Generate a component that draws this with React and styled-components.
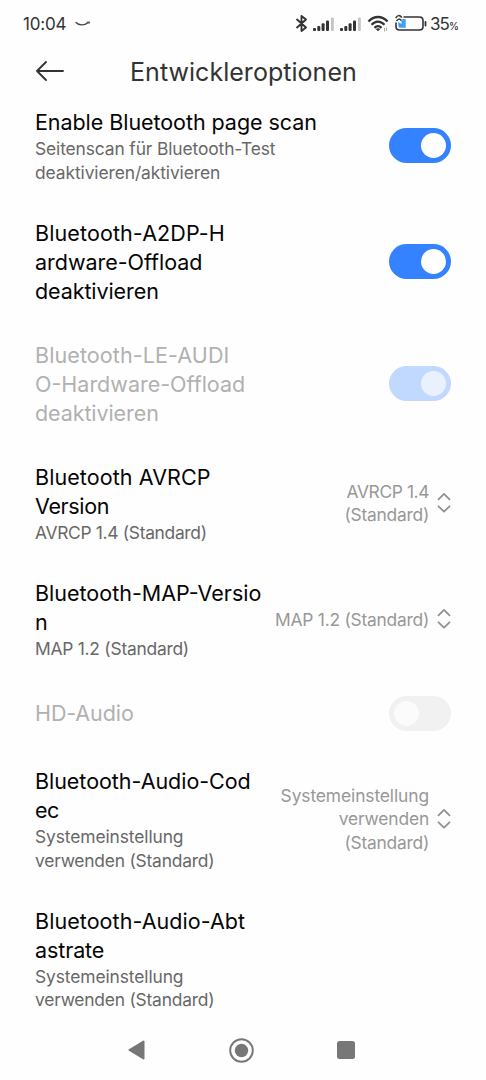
import React from 'react'
import styled, { createGlobalStyle } from 'styled-components'

const GlobalStyle = createGlobalStyle`
  body {
    margin: 0;
    background: #fefefe;
    font-family: Inter, 'Liberation Sans', sans-serif;
  }
`

const Screen = styled.div`
  display: flex;
  flex-direction: column;
  width: 486px;
  height: 1080px;
  overflow: hidden;
  background: #fefefe;
`

const StatusBar = styled.header`
  display: flex;
  justify-content: space-between;
  box-sizing: border-box;
  height: 46px;
  padding: 2px 28px 0 23px;
  color: #333;
`

const StatusGroup = styled.div`
  display: flex;
  align-items: center;
  height: 44px;
`

const Clock = styled.span`
  font-size: 17px;
  letter-spacing: -0.2px;
  margin-right: 9px;
`

const Percent = styled.span`
  width: 28px;
  font-size: 17px;
  letter-spacing: -0.9px;
  white-space: nowrap;

  small {
    font-size: 10px;
    font-weight: 500;
  }
`

const TitleBar = styled.div`
  display: flex;
  align-items: center;
  height: 50px;
  padding: 0 35px;
`

const BackButton = styled.button`
  display: flex;
  width: 30px;
  padding: 0;
  border: none;
  background: none;
`

const PageTitle = styled.h1`
  margin: 0 0 0 65px;
  font-size: 25px;
  font-weight: 400;
  line-height: 34px;
  letter-spacing: 0.04px;
  color: #333;
  padding-top: 2px;
`

const List = styled.main`
  display: flex;
  flex-direction: column;
  gap: 35px;
  flex: 1;
  padding: 12.4px 35px 0;
`

const Row = styled.section`
  display: flex;
  justify-content: space-between;
  align-items: center;
  min-height: 36.7px;
`

const Label = styled.div`
  color: ${props => props.$disabled ? '#b1b1b1' : '#050505'};
`

const Value = styled.div`
  display: flex;
  align-items: center;
  gap: 8px;
  margin-bottom: 1px;
  text-align: right;
`

const Line = styled.div`
  white-space: nowrap;
  font-size: 21.5px;
  line-height: 29px;
  letter-spacing: ${props => props.$ls || 0}px;
`

const SmallLine = styled(Line)`
  font-size: 17.4px;
  line-height: 23.3px;
  color: ${props => props.$light ? '#989898' : '#686868'};
`

const Toggle = styled.div`
  display: flex;
  justify-content: ${props => props.$on ? 'flex-end' : 'flex-start'};
  box-sizing: border-box;
  width: 62px;
  height: 35px;
  margin-bottom: 1px;
  padding: 5px;
  border-radius: 18px;
  background: ${props => !props.$on ? '#f1f1f1' : props.$disabled ? '#c1d9ff' : '#3482ff'};
`

const Knob = styled.div`
  width: 25px;
  height: 25px;
  border-radius: 50%;
  background: ${props => !props.$disabled ? '#fff' : props.$on ? '#e9f1ff' : '#fbfbfb'};
`

const NavBar = styled.footer`
  display: flex;
  justify-content: space-between;
  align-items: center;
  height: 60px;
  padding: 0 131px 0 128px;
`

const rows = [
  {
    title: [['Enable Bluetooth page scan', -0.06]],
    sub: [['Seitenscan für Bluetooth-Test', -0.12], ['deaktivieren/aktivieren', -0.09]],
    toggle: true,
    on: true,
  },
  {
    title: [['Bluetooth-A2DP-H', 0.11], ['ardware-Offload', -0.03], ['deaktivieren', -0.09]],
    toggle: true,
    on: true,
  },
  {
    title: [['Bluetooth-LE-AUDI', 0.1], ['O-Hardware-Offload', 0], ['deaktivieren', -0.09]],
    toggle: true,
    on: true,
    disabled: true,
  },
  {
    title: [['Bluetooth AVRCP', 0.08], ['Version', -0.35]],
    sub: [['AVRCP 1.4 (Standard)', -0.31]],
    value: [['AVRCP 1.4', -0.4], ['(Standard)', -0.24]],
  },
  {
    title: [['Bluetooth-MAP-Versio', 0], ['n', 0]],
    sub: [['MAP 1.2 (Standard)', -0.24]],
    value: [['MAP 1.2 (Standard)', -0.24]],
  },
  {
    title: [['HD-Audio', -0.1]],
    toggle: true,
    on: false,
    disabled: true,
  },
  {
    title: [['Bluetooth-Audio-Cod', -0.04], ['ec', -0.6]],
    sub: [['Systemeinstellung', -0.1], ['verwenden (Standard)', -0.21]],
    value: [['Systemeinstellung', -0.1], ['verwenden', -0.17], ['(Standard)', -0.24]],
  },
  {
    title: [['Bluetooth-Audio-Abt', 0.06], ['astrate', -0.1]],
    sub: [['Systemeinstellung', -0.1], ['verwenden (Standard)', -0.21]],
  },
]

const Swoosh = () => (
  <svg width="16" height="6" viewBox="0 0 16 6" fill="none" stroke="#444" strokeLinecap="round">
    <path d="M1 1.5C4 4.5 9 4.8 13 1.8" strokeWidth="1.3" />
    <path d="M12 1.2L14.6 1L14 2.4" strokeWidth="1" />
  </svg>
)

const StatusIcons = () => (
  <svg width="135" height="24" viewBox="295 12 135 24" fill="none">
    <path d="M296.5 19L306 27.5L301.5 31V16L306 19.5L296.5 28" stroke="#333" strokeWidth="1.9" strokeLinejoin="round" />
    {[313, 340].map(x => (
      <g key={x} fill="#333">
        <rect x={x} y="28" width="3" height="3" rx="1" />
        <rect x={x + 4.3} y="26" width="3" height="5" rx="1" />
        <rect x={x + 8.6} y="23.3" width="3" height="7.7" rx="1" />
        <rect x={x + 13} y="20.5" width="3" height="10.5" rx="1" />
        <rect x={x + 18} y="17.5" width="2.8" height="13.5" rx="1" fill="#c4c4c4" />
      </g>
    ))}
    <g stroke="#333" strokeWidth="2.3">
      <path d="M368.5 21.5C374 15.5 382 15.5 387.5 21.5" />
      <path d="M371.5 24.8C375.5 20.6 380.5 20.6 384.5 24.8" />
      <path d="M374.5 27.9C376.8 25.5 379.2 25.5 381.5 27.9" />
    </g>
    <path d="M375.8 29L378 31.2L380.2 29Q378 27.5 375.8 29Z" fill="#333" />
    <path d="M384.5 28V31.5M386.5 27.5V31" stroke="#aaa" />
    {/* battery, with the power saving waves over its corner */}
    <path d="M403.5 17H419.5Q423 17 423 20.5V26.5Q423 30 419.5 30H399.5Q396 30 396 26.5V22.5" stroke="#333" strokeWidth="1.6" />
    <path d="M398.3 22L401.5 24V20L403 19H405.7V27.7H400Q398.3 27.7 398.3 26Z" fill="#3da0f5" />
    <path d="M395.7 18Q398.5 13.5 401.8 17.5M396.5 21Q398.8 17.5 401.3 20.5" stroke="#333" strokeWidth="1.5" />
    <path d="M425.5 22V25.5" stroke="#333" strokeWidth="1.8" strokeLinecap="round" />
  </svg>
)

const BackIcon = () => (
  <svg width="30" height="22" viewBox="0 0 30 22" fill="none" stroke="#333" strokeWidth="1.9" strokeLinecap="round" strokeLinejoin="round">
    <path d="M11 2L2 11L11 20M2 11H28" />
  </svg>
)

const UpDown = () => (
  <svg width="14" height="22" viewBox="0 0 14 22" fill="none" stroke="#929292" strokeWidth="1.8" strokeLinecap="round" strokeLinejoin="round">
    <path d="M1.5 7.3L7 1.9L12.5 7.3M1.5 14.3L7 19.7L12.5 14.3" />
  </svg>
)

const App = () => {
  return (
    <>
      <GlobalStyle />
      <Screen>
        <StatusBar>
          <StatusGroup>
            <Clock>10:04</Clock>
            <Swoosh />
          </StatusGroup>
          <StatusGroup>
            <StatusIcons />
            <Percent>35<small>%</small></Percent>
          </StatusGroup>
        </StatusBar>
        <TitleBar>
          <BackButton aria-label="Zurück"><BackIcon /></BackButton>
          <PageTitle>Entwickleroptionen</PageTitle>
        </TitleBar>
        <List>
          {rows.map((row, idx) => (
            <Row key={idx}>
              <Label $disabled={row.disabled}>
                {row.title.map(([text, ls]) => <Line key={text} $ls={ls}>{text}</Line>)}
                {row.sub && row.sub.map(([text, ls]) => <SmallLine key={text} $ls={ls}>{text}</SmallLine>)}
              </Label>
              {row.toggle && (
                <Toggle $on={row.on} $disabled={row.disabled}>
                  <Knob $on={row.on} $disabled={row.disabled} />
                </Toggle>
              )}
              {row.value && (
                <Value>
                  <div>
                    {row.value.map(([text, ls]) => <SmallLine key={text} $light $ls={ls}>{text}</SmallLine>)}
                  </div>
                  <UpDown />
                </Value>
              )}
            </Row>
          ))}
        </List>
        <NavBar>
          <svg width="17" height="20" viewBox="0 0 17 20">
            <path d="M1.5 10L15.5 1.5V18.5Z" fill="#777" stroke="#777" strokeWidth="2" strokeLinejoin="round" />
          </svg>
          <svg width="25" height="25" viewBox="0 0 25 25">
            <circle cx="12.5" cy="12.5" r="11.3" fill="none" stroke="#777" strokeWidth="1.9" />
            <circle cx="12.5" cy="12.5" r="6.7" fill="#777" />
          </svg>
          <svg width="18" height="18" viewBox="0 0 18 18">
            <rect width="18" height="18" rx="2.5" fill="#777" />
          </svg>
        </NavBar>
      </Screen>
    </>
  )
}

export default App
